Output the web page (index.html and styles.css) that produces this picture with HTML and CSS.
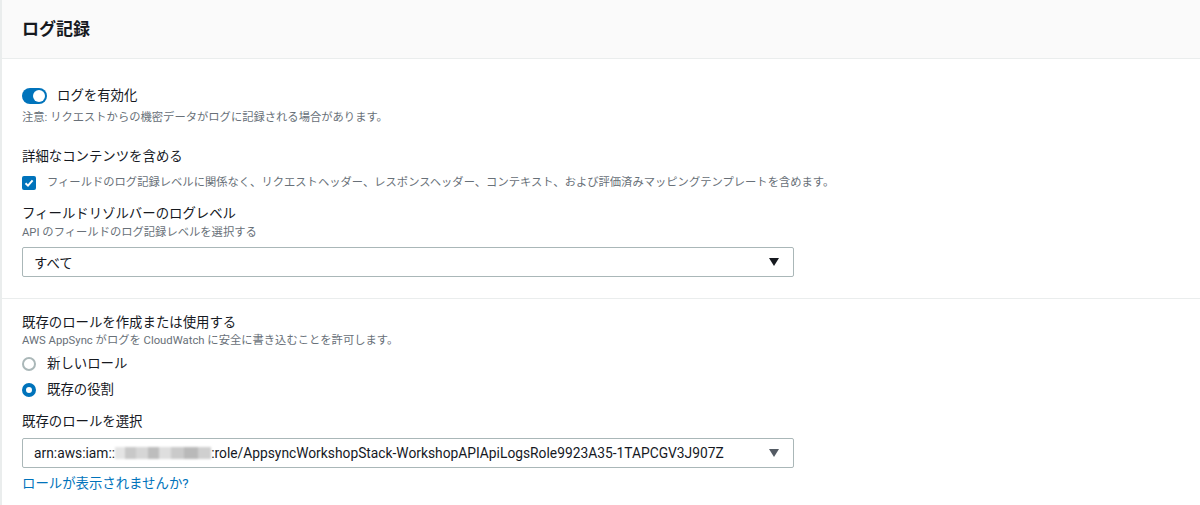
FILE: index.html
```html
<!DOCTYPE html>
<html lang="ja">
<head>
    <meta charset="UTF-8">
    <meta name="viewport" content="width=device-width, initial-scale=1.0">
    <title>ログ記録</title>
    <link rel="stylesheet" href="styles.css">
</head>
<body>
    <div class="panel">
        <div class="panel-header">
            <h2>ログ記録</h2>
        </div>

        <div class="section first">
            <label class="toggle-row">
                <span class="toggle on"><span class="knob"></span></span>
                <span class="label">ログを有効化</span>
            </label>
            <div class="note">注意: リクエストからの機密データがログに記録される場合があります。</div>

            <div class="field-label detail-label">詳細なコンテンツを含める</div>
            <label class="check-row">
                <span class="checkbox checked">
                    <svg width="10" height="10" viewBox="0 0 10 10"><path d="M1.5 5.2 L4 7.6 L8.6 2.4" fill="none" stroke="#fff" stroke-width="2"/></svg>
                </span>
                <span class="note">フィールドのログ記録レベルに関係なく、リクエストヘッダー、レスポンスヘッダー、コンテキスト、および評価済みマッピングテンプレートを含めます。</span>
            </label>

            <div class="field-label level-label">フィールドリゾルバーのログレベル</div>
            <div class="description">API のフィールドのログ記録レベルを選択する</div>
            <div class="select">
                <span class="value">すべて</span>
                <span class="arrow"></span>
            </div>
        </div>

        <div class="section second">
            <div class="field-label">既存のロールを作成または使用する</div>
            <div class="description">AWS AppSync がログを CloudWatch に安全に書き込むことを許可します。</div>
            <label class="radio-row new-role">
                <span class="radio"></span>
                <span class="label">新しいロール</span>
            </label>
            <label class="radio-row existing-role">
                <span class="radio checked"></span>
                <span class="label">既存の役割</span>
            </label>

            <div class="field-label role-label">既存のロールを選択</div>
            <div class="select role-select">
                <span class="value">arn:aws:iam::<span class="masked"></span>:role/AppsyncWorkshopStack-WorkshopAPIApiLogsRole9923A35-1TAPCGV3J907Z</span>
                <span class="arrow muted"></span>
            </div>
            <a class="link" href="#">ロールが表示されませんか?</a>
        </div>
    </div>
</body>
</html>
```

FILE: styles.css
```css
body {
    margin: 0;
    font-family: Roboto, "Noto Sans CJK JP", sans-serif;
    color: #16191f;
    background: #fff;
}
.panel {
    border-left: 2px solid #eaeded;
    height: 505px;
    box-sizing: border-box;
}
.panel-header {
    height: 58px;
    background: #fafafa;
    border-bottom: 1px solid #eaeded;
    display: flex;
    align-items: center;
    padding-left: 20px;
}
.panel-header h2 {
    margin: 0;
    font-size: 17px;
    font-weight: 700;
    line-height: 20px;
}
.section {
    padding: 0 20px;
    display: flex;
    flex-direction: column;
    align-items: flex-start;
}
.section.first {
    padding-top: 27px;
    padding-bottom: 21px;
    border-bottom: 1px solid #eaeded;
}
.section.second {
    padding-top: 14px;
}
.label, .field-label {
    font-size: 13.4px;
    line-height: 20px;
}
.note, .description {
    font-size: 11.3px;
    line-height: 16px;
    color: #687078;
}
.toggle-row {
    display: flex;
    align-items: center;
    gap: 10px;
    height: 20px;
    margin-bottom: 4px;
}
.toggle {
    width: 25px;
    height: 16px;
    border-radius: 8px;
    background: #0073bb;
    display: flex;
    align-items: center;
    justify-content: flex-end;
    padding: 0 2px;
    box-sizing: border-box;
}
.knob {
    width: 12px;
    height: 12px;
    border-radius: 50%;
    background: #fff;
}
.detail-label {
    margin-top: 21px;
}
.check-row {
    display: flex;
    align-items: center;
    gap: 11px;
    margin-top: 8px;
}
.checkbox {
    width: 14px;
    height: 14px;
    border-radius: 2px;
    background: #0073bb;
    display: flex;
    align-items: center;
    justify-content: center;
}
.level-label {
    margin-top: 13px;
}
.description {
    margin-top: 1px;
}
.second .description {
    margin-top: 0;
}
.select {
    margin-top: 6px;
    width: 772px;
    height: 30px;
    box-sizing: border-box;
    border: 1px solid #aab7b8;
    border-radius: 2px;
    display: flex;
    align-items: center;
    justify-content: space-between;
    padding: 0 14px 0 11px;
    font-size: 13.4px;
}
.role-select .value {
    font-size: 13.8px;
}
.arrow {
    width: 0;
    height: 0;
    border-left: 5px solid transparent;
    border-right: 5px solid transparent;
    border-top: 8px solid #16191f;
}
.arrow.muted {
    border-top-color: #545b64;
}
.masked {
    display: inline-block;
    width: 96px;
    height: 12px;
    vertical-align: -1px;
    background: linear-gradient(90deg, #e4e4e4 0 10%, #c8c8c8 10% 22%, #d6d6d6 22% 34%, #bdbdbd 34% 46%, #dedede 46% 58%, #cacaca 58% 72%, #b9b9b9 72% 86%, #cfcfcf 86% 100%);
    filter: blur(1px);
}
.radio-row {
    display: flex;
    align-items: center;
    gap: 11px;
    height: 20px;
}
.radio-row.new-role {
    margin-top: 5px;
}
.radio-row.existing-role {
    margin-top: 6px;
}
.radio {
    width: 14px;
    height: 14px;
    box-sizing: border-box;
    border-radius: 50%;
    border: 2px solid #aab7b8;
    background: #fff;
}
.radio.checked {
    border: 4px solid #0073bb;
}
.role-label {
    margin-top: 12px;
}
.link {
    margin-top: 6px;
    font-size: 13.4px;
    line-height: 20px;
    color: #0073bb;
    text-decoration: none;
}
```
